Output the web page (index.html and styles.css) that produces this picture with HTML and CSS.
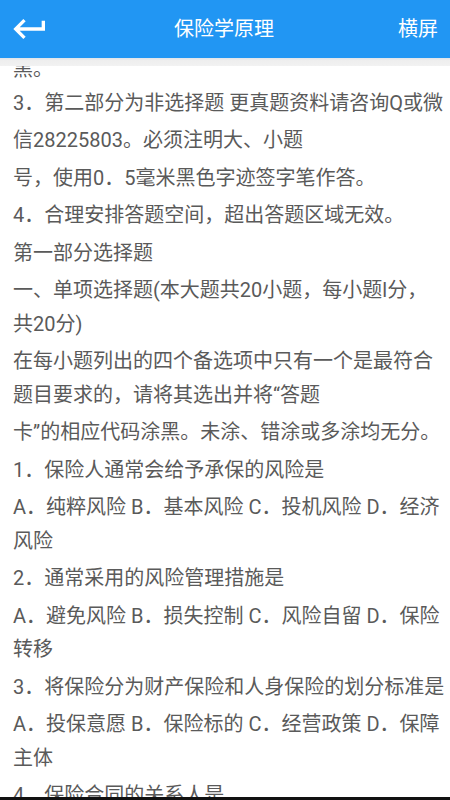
FILE: index.html
```html
<!DOCTYPE html>
<html lang="zh-CN">
<head>
<meta charset="utf-8">
<title>保险学原理</title>
<link rel="stylesheet" href="styles.css">
</head>
<body>
<div class="app">
  <header class="bar">
    <button class="back" aria-label="返回">
      <svg viewBox="0 0 24 24" width="40" height="40"><path d="M19 7v4H5.83l3.58-3.59L8 6l-6 6 6 6 1.41-1.41L5.83 13H21V7z" fill="#fff"/></svg>
    </button>
    <h1 class="title">保险学原理</h1>
    <span class="rotate">横屏</span>
  </header>
  <main class="content">
    <div class="shade"></div>
    <article class="doc">
      <p>黑。<br>3．第二部分为非选择题 更真题资料请咨询Q或微</p>
      <p>信28225803。必须注明大、小题</p>
      <p>号，使用0．5毫米黑色字迹签字笔作答。</p>
      <p>4．合理安排答题空间，超出答题区域无效。</p>
      <p>第一部分选择题</p>
      <p>一、单项选择题(本大题共20小题，每小题l分，<br>共20分)</p>
      <p>在每小题列出的四个备选项中只有一个是最符合<br>题目要求的，请将其选出并将“答题</p>
      <p>卡”的相应代码涂黑。未涂、错涂或多涂均无分。</p>
      <p>1．保险人通常会给予承保的风险是</p>
      <p>A．纯粹风险 B．基本风险 C．投机风险 D．经济<br>风险</p>
      <p>2．通常采用的风险管理措施是</p>
      <p>A．避免风险 B．损失控制 C．风险自留 D．保险<br>转移</p>
      <p>3．将保险分为财产保险和人身保险的划分标准是</p>
      <p>A．投保意愿 B．保险标的 C．经营政策 D．保障<br>主体</p>
      <p>4．保险合同的关系人是</p>
    </article>
  </main>
  <div class="navline"></div>
</div>
</body>
</html>
```
FILE: styles.css
```css
* { box-sizing: border-box; }
html, body { margin: 0; padding: 0; }
body {
  width: 450px;
  height: 800px;
  overflow: hidden;
  background: #fff;
  font-family: Roboto, "Noto Sans CJK SC", "Noto Sans", sans-serif;
}
.app {
  width: 450px;
  height: 800px;
  display: flex;
  flex-direction: column;
}
.bar {
  flex: 0 0 58px;
  background: #2196f3;
  display: flex;
  align-items: center;
  justify-content: space-between;
  padding: 0 12px 0 10px;
  color: #fff;
}
.back {
  width: 40px;
  height: 40px;
  padding: 0;
  border: 0;
  background: none;
  display: flex;
}
.title {
  margin: 0;
  font-size: 20px;
  font-weight: 400;
  line-height: 1;
}
.rotate {
  font-size: 20px;
  line-height: 1;
}
.content {
  flex: 1;
  position: relative;
  overflow: hidden;
  background: #fff;
}
.shade {
  position: absolute;
  left: 0;
  top: 0;
  width: 100%;
  height: 8px;
  background: linear-gradient(#dfe4ea, #eeeeee 30%, #f2f2f2);
  z-index: 1;
}
.doc {
  margin-top: -5px;
  padding: 0 0 0 13px;
  color: #5a5a5a;
  font-size: 20px;
  line-height: 33.5px;
  white-space: nowrap;
}
.doc p { margin: 0 0 4px; }
.navline {
  flex: 0 0 3px;
  background: #111;
}
```
